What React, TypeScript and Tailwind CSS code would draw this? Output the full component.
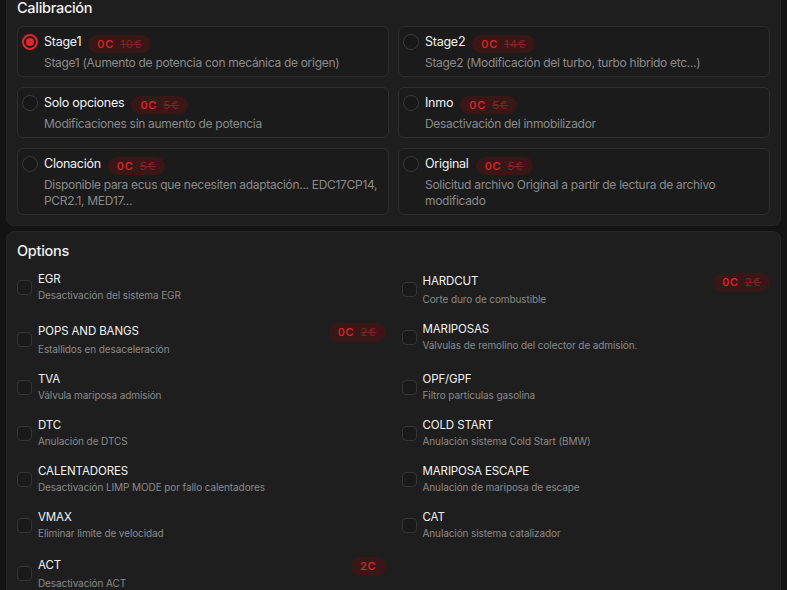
import React from 'react';

type Calib = { id: string; title: string; desc: string; price: string };
type Opt = { title: string; desc: string; price?: string; plain?: boolean };

const calibs: Calib[] = [
  { id: 'stage1', title: 'Stage1', desc: 'Stage1 (Aumento de potencia con mecánica de origen)', price: '10€' },
  { id: 'stage2', title: 'Stage2', desc: 'Stage2 (Modificación del turbo, turbo hibrido etc...)', price: '14€' },
  { id: 'solo', title: 'Solo opciones', desc: 'Modificaciones sin aumento de potencia', price: '5€' },
  { id: 'inmo', title: 'Inmo', desc: 'Desactivación del inmobilizador', price: '5€' },
  { id: 'clon', title: 'Clonación', desc: 'Disponible para ecus que necesiten adaptación... EDC17CP14, PCR2.1, MED17...', price: '5€' },
  { id: 'orig', title: 'Original', desc: 'Solicitud archivo Original a partir de lectura de archivo modificado', price: '5€' },
];

const options: Opt[] = [
  { title: 'EGR', desc: 'Desactivación del sistema EGR' },
  { title: 'HARDCUT', desc: 'Corte duro de combustible', price: '2€' },
  { title: 'POPS AND BANGS', desc: 'Estallidos en desaceleración', price: '2€' },
  { title: 'MARIPOSAS', desc: 'Válvulas de remolino del colector de admisión.' },
  { title: 'TVA', desc: 'Válvula mariposa admisión' },
  { title: 'OPF/GPF', desc: 'Filtro partículas gasolina' },
  { title: 'DTC', desc: 'Anulación de DTCS' },
  { title: 'COLD START', desc: 'Anulación sistema Cold Start (BMW)' },
  { title: 'CALENTADORES', desc: 'Desactivación LIMP MODE por fallo calentadores' },
  { title: 'MARIPOSA ESCAPE', desc: 'Anulación de mariposa de escape' },
  { title: 'VMAX', desc: 'Eliminar limite de velocidad' },
  { title: 'CAT', desc: 'Anulación sistema catalizador' },
  { title: 'ACT', desc: 'Desactivación ACT', price: '2C', plain: true },
];

const Badge: React.FC<{ price: string; plain?: boolean; small?: boolean }> = ({ price, plain, small }) => (
  <span
    className={`inline-flex items-center gap-[6px] rounded-full bg-[#3a1717] font-medium tracking-[0.08em] ${
      small ? 'h-[18px] px-[9px] text-[11px]' : 'h-[19px] px-[9px] text-[11px]'
    }`}
  >
    {plain ? (
      <span className="text-[#e0282b]">{price}</span>
    ) : (
      <>
        <span className="text-[#e0282b]">0C</span>
        <span className="text-[#7a2426] line-through">{price}</span>
      </>
    )}
  </span>
);

const Radio: React.FC<{ checked: boolean }> = ({ checked }) =>
  checked ? (
    <span className="flex h-[16px] w-[16px] shrink-0 items-center justify-center rounded-full border-[2px] border-[#e3262b] bg-[#1b1b1b]">
      <span className="h-[8px] w-[8px] rounded-full bg-[#e3262b]" />
    </span>
  ) : (
    <span className="h-[16px] w-[16px] shrink-0 rounded-full border border-[#3a3a3a] bg-[#181818]" />
  );

export default function App() {
  const selected = 'stage1';
  return (
    <div
      className="min-h-[590px] overflow-hidden bg-[#131313] px-[6px] text-white"
      style={{ fontFamily: 'Inter, "Noto Sans", sans-serif' }}
    >
      <section className="-mt-[12px] rounded-[8px] border border-[#262626] bg-[#1e1e1e] px-[10px] pb-[10px] pt-[8px]">
        <h2 className="mb-[7px] text-[14.5px] font-medium leading-[22px] tracking-[-0.02em] text-[#f2f2f2]">
          Calibración
        </h2>
        <div className="grid grid-cols-2 gap-x-[9px] gap-y-[10px]">
          {calibs.map((c) => (
            <div
              key={c.id}
              className="rounded-[6px] border border-[#2e2e2e] bg-[#1b1b1b] pb-[5px] pl-[4px] pr-[2px] pt-[5px]"
            >
              <div className="flex h-[20px] items-center gap-[6px]">
                <Radio checked={c.id === selected} />
                <span className="text-[12.5px] tracking-[-0.02em] text-[#f2f2f2]">{c.title}</span>
                <span className="ml-[1px]">
                  <Badge price={c.price} small />
                </span>
              </div>
              <p className="mt-[3px] pl-[22px] text-[12px] leading-[16px] tracking-[-0.025em] text-[#8a8a8a]">
                {c.desc}
              </p>
            </div>
          ))}
        </div>
      </section>

      <section className="mt-[5px] rounded-[8px] border border-[#262626] bg-[#1e1e1e] px-[10px] pb-[10px] pt-[8px]">
        <h2 className="mb-[10px] text-[14.5px] font-medium leading-[22px] tracking-[-0.02em] text-[#f2f2f2]">Options</h2>
        <div className="grid grid-cols-2 items-start gap-x-[16px] gap-y-[16px]">
          {options.map((o) => (
            <div key={o.title} className="flex items-center gap-[6px]">
              <span className="h-[15px] w-[15px] shrink-0 rounded-[4px] border border-[#353535] bg-[#1a1a1a]" />
              <div className="min-w-0 flex-1">
                <div className={`flex items-center justify-between ${o.price ? 'h-[20px]' : 'h-[16px]'}`}>
                  <span className="text-[11.5px] tracking-[-0.01em] text-[#f2f2f2]">{o.title}</span>
                  {o.price && <Badge price={o.price} plain={o.plain} />}
                </div>
                <p className="text-[10px] leading-[14px] tracking-[-0.01em] text-[#8a8a8a]">{o.desc}</p>
              </div>
            </div>
          ))}
        </div>
      </section>
    </div>
  );
}
